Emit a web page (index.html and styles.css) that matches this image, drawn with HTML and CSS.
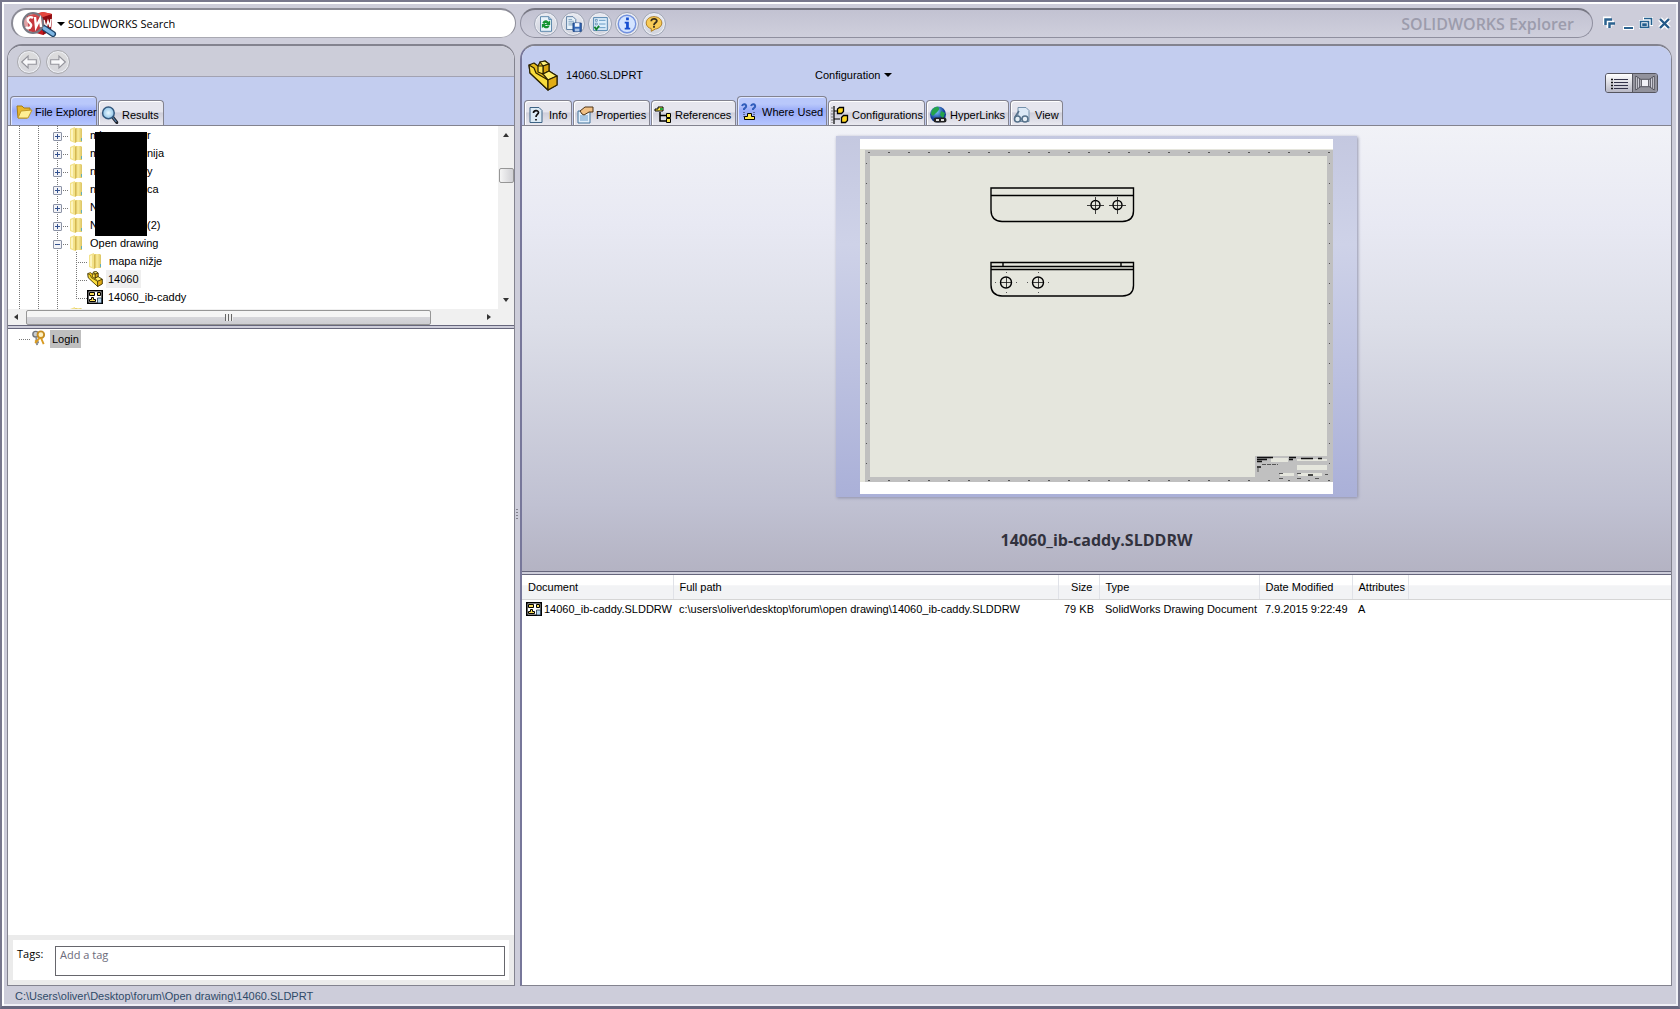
FILE: index.html
```html
<!DOCTYPE html>
<html lang="en">
<head>
<meta charset="utf-8">
<title>SOLIDWORKS Explorer</title>
<link rel="stylesheet" href="styles.css">
</head>
<body>
<svg class="defs" aria-hidden="true">
  <defs>
    <linearGradient id="gold" x1="0" y1="0" x2="1" y2="0"><stop offset="0" stop-color="#efdc80"/><stop offset=".5" stop-color="#f6e795"/><stop offset="1" stop-color="#dcc462"/></linearGradient>
    <linearGradient id="blue" x1="0" y1="0" x2="0" y2="1"><stop offset="0" stop-color="#7db2d2"/><stop offset="1" stop-color="#174a78"/></linearGradient>
    <radialGradient id="lens"><stop offset="0" stop-color="#e9f8ff"/><stop offset="1" stop-color="#8fc4e8"/></radialGradient>
    <radialGradient id="globe" cx=".4" cy=".3"><stop offset="0" stop-color="#7fd0ff"/><stop offset="1" stop-color="#123c96"/></radialGradient>
    <linearGradient id="side" x1="0" y1="0" x2="0" y2="1"><stop offset="0" stop-color="#c4c8e0"/><stop offset=".3" stop-color="#ced2e8"/><stop offset="1" stop-color="#aab0d8"/></linearGradient>
  </defs>
  <symbol id="folder" viewBox="0 0 14 16"><path d="M1 2 6 0v16L1 14z" fill="#f3e28a"/><path d="M6 1h6l1 1v13H6z" fill="url(#gold)"/><path d="M6 2 7.500 1v14L6 16z" fill="#d3b853"/><path d="M2 3 4 2v12l-2-1z" fill="#fdf5c0"/><path d="M12 11h1v3h-1z" fill="#62aeb8"/></symbol>
  <symbol id="part" viewBox="0 0 30 31"><g stroke="#2b2200" stroke-width="1.2" stroke-linejoin="round"><path d="M1 5 6 3 10 6 12 2 17 1 21 4V11l8 5V25l-9 5L2 13z" fill="#e8bc1a"/><path d="M1 5 6 8 8 13 20 20v10L2 13z" fill="#f9dc3c"/><path d="M12 2 17 1 21 4 15 6z" fill="#fff27a"/><path d="M15 6 21 4V11l-6 3z" fill="#d9a510"/><path d="M15 14 21 11l8 5-9 4z" fill="#ffee6c"/><path d="M20 20 29 16v9l-9 5z" fill="#e1ac14"/><path d="M10 6 15 6V14L10 12z" fill="#ffe650"/></g></symbol>
  <symbol id="drawing" viewBox="0 0 16 14"><path d="M.8.8h14.4v12.4H.8z" fill="#fff" stroke="#000" stroke-width="1.600"/><g fill="#f8dc58" stroke="#000"><path d="M2.500 2.500h5v3h-5zM10.500 2.500h3v3h-3z"/><path d="M4.500 7.500h2v2h2v2h-6v-2h2z"/></g><path d="M10.500 8h4v5h-4z" fill="#b9d8f0" stroke="#234" stroke-width=".8"/></symbol>
  <symbol id="mag" viewBox="0 0 16 17"><path d="m10 10 4.500 5.500" stroke="#20242c" stroke-width="3" stroke-linecap="round"/><path d="m10 10 4 5" stroke="#557da8" stroke-width="1.200"/><circle cx="6.500" cy="6.500" r="5.500" fill="url(#lens)" stroke="#34597f" stroke-width="1.400"/></symbol>
</svg>
<div class="window">
  <header class="titlebar">
    <form class="search">
      <svg class="logo" viewBox="0 0 36 26" aria-hidden="true"><path d="M6 5 22 1l9 2-1 16-8 5L8 20z" fill="#c3161c"/><path d="m22 6 9-3-1 16-8 5z" fill="#8f0d12"/><path d="M6 5 22 1l9 2-9 3z" fill="#e5473e"/><path d="m23 9 2 8 2-7 2 6 1-8" fill="none" stroke="#fff" stroke-width="1.500"/><path d="m23 17 9 6" stroke="#1c4267" stroke-width="6" stroke-linecap="round"/><path d="m23 17 9 6" stroke="#7db6e4" stroke-width="3.400" stroke-linecap="round"/><circle cx="12" cy="12" r="10" fill="#c9545a" fill-opacity=".55" stroke="#777883" stroke-width="2"/><path d="M12 7c-3-2-6 0-5 3 1 2 4 3 3 5-1 3-4 2-5 1M14 6l1 10 4-8 1 8" fill="none" stroke="#fff" stroke-width="2.400"/></svg>
      <i class="caret"></i>
      <input class="search-input" type="text" value="SOLIDWORKS Search" aria-label="Search">
    </form>
    <div class="toolbar">
      <button class="round" aria-label="Refresh"><svg viewBox="0 0 24 24"><path d="M6 4h9l3 3v13H6z" fill="#e8f3fb" stroke="#5583a8"/><path d="M15 4v3h3" fill="#aecce4" stroke="#5583a8"/><path d="M8 11c1-4 5-4 7-1.500l1.500-1.500v5h-5l1.500-1.500c-1-1-2-1-2.500.5zM16 13.500c-1 4-5 4-7 1.500l-1.500 1.500v-4.500h5L11 13.500c1 1 2 1 2.500 0z" fill="#149432"/></svg></button>
      <button class="round" aria-label="Save copy"><svg viewBox="0 0 24 24"><path d="M5 4h7l3 3v11H5z" fill="#e8f3fb" stroke="#55779c"/><path d="M7 7h4M7 9h6M7 11h6M7 13h6" stroke="#7b9cba"/><path d="M12 11h9v9h-9z" fill="#3267b8" stroke="#173f80"/><path d="M14 11h5v4h-5z" fill="#f1f6fd"/><path d="M14 17h5v3h-5z" fill="#a9c4e8"/></svg></button>
      <button class="round" aria-label="Options"><svg viewBox="0 0 24 24"><path d="M5 5h15v14H5z" fill="#dcedfb" stroke="#4d80ad"/><path d="M7 7h2v2H7zM7 11h2v2H7z" fill="#fff" stroke="#4d80ad" stroke-width=".8"/><path d="M11 8h7M11 12h7M11 16h7" stroke="#5c93c0"/><path d="m6 15 2 3 3-4" fill="none" stroke="#118330" stroke-width="2"/></svg></button>
      <button class="round" aria-label="Information"><svg viewBox="0 0 24 24"><circle cx="12" cy="12" r="9.500" fill="#d4e4ff" stroke="#7291df" stroke-width="1.500"/><path d="M11 5h3v3h-3zM9.500 9.500H14V16h1.500v2h-6v-2H11v-4.500H9.500z" fill="#164ed0"/></svg></button>
      <button class="round" aria-label="Help"><svg viewBox="0 0 24 24"><path d="M12 4c5 0 8.500 3 8.500 7 0 3-3 6-7 6.500L9 20v-3c-3-.5-5.500-3-5.500-6C3.500 7 7 4 12 4z" fill="#f8cb57" stroke="#a87619"/><path d="M9 9c0-4 7-3 6 0-.5 1.500-3 2-3 4" fill="none" stroke="#3c311b" stroke-width="2"/><path d="M11 14h2v2h-2z" fill="#3c311b"/></svg></button>
      <h1 class="brand">SOLIDWORKS Explorer</h1>
    </div>
    <div class="controls">
      <button aria-label="Compact"><svg viewBox="0 0 14 14"><path d="M2 9V3h6M6 12V7h5" fill="none" stroke="#fff" stroke-width="5"/><path d="M2.500 9V3.500H9M6.500 12V7.500H12" fill="none" stroke="#2c6390" stroke-width="2.500"/></svg></button>
      <button aria-label="Minimize"><svg viewBox="0 0 14 14"><path d="M2 10h11v4H2z" fill="#fff"/><path d="M3 11h9v2H3z" fill="#2c6390"/></svg></button>
      <button aria-label="Restore"><svg viewBox="0 0 14 14"><path d="M4 1h10v9H4zM0 4h10v9H0z" fill="#fff"/><path d="M5 2.500h7.500V9M1.500 5.500h8v6h-8zM4 8h3v1.500H4z" fill="none" stroke="#23608f" stroke-width="1.600"/></svg></button>
      <button aria-label="Close"><svg viewBox="0 0 14 14"><path d="m3 3 9 9M12 3 3 12" stroke="#fff" stroke-width="5"/><path d="m3 3 9 9M12 3 3 12" stroke="#255b89" stroke-width="2.400"/></svg></button>
    </div>
  </header>

  <div class="panes">
    <aside class="pane left">
      <div class="nav">
        <button class="round" aria-label="Back"><svg viewBox="0 0 24 24"><path d="m4 12 7-6.500v4h9v5h-9v4z" fill="#f8f8fa" stroke="#94949c" stroke-width="1.200"/></svg></button>
        <button class="round" aria-label="Forward"><svg viewBox="0 0 24 24"><path d="m20 12-7-6.500v4H4v5h9v4z" fill="#f8f8fa" stroke="#94949c" stroke-width="1.200"/></svg></button>
      </div>
      <div class="tabs left-tabs">
        <button class="tab active t-files"><svg viewBox="0 0 18 18"><path d="M2 3h5l2 2h6v3l-3 7H3z" fill="#e7b62d" stroke="#a67c12"/><path d="m6 8 11-1-4 8H3z" fill="#ffee94" stroke="#c29a28"/></svg>File Explorer</button>
        <button class="tab t-results"><svg viewBox="0 0 16 17"><use href="#mag"/></svg>Results</button>
      </div>
      <div class="tree-pane">
        <ul class="tree">
          <li class="row"><i class="g"></i><i class="g"></i><span class="g dash"><button class="toggle plus" aria-label="Expand"></button></span><svg class="fold"><use href="#folder"/></svg><span class="cut">mi</span><span>r</span></li>
          <li class="row"><i class="g"></i><i class="g"></i><span class="g dash"><button class="toggle plus" aria-label="Expand"></button></span><svg class="fold"><use href="#folder"/></svg><span class="cut">m</span><span>nija</span></li>
          <li class="row"><i class="g"></i><i class="g"></i><span class="g dash"><button class="toggle plus" aria-label="Expand"></button></span><svg class="fold"><use href="#folder"/></svg><span class="cut">n</span><span>y</span></li>
          <li class="row"><i class="g"></i><i class="g"></i><span class="g dash"><button class="toggle plus" aria-label="Expand"></button></span><svg class="fold"><use href="#folder"/></svg><span class="cut">n</span><span>ca</span></li>
          <li class="row"><i class="g"></i><i class="g"></i><span class="g dash"><button class="toggle plus" aria-label="Expand"></button></span><svg class="fold"><use href="#folder"/></svg><span class="cut">N</span></li>
          <li class="row"><i class="g"></i><i class="g"></i><span class="g dash"><button class="toggle plus" aria-label="Expand"></button></span><svg class="fold"><use href="#folder"/></svg><span class="cut">N</span><span>(2)</span></li>
          <li class="row"><i class="g"></i><i class="g"></i><span class="g dash"><button class="toggle" aria-label="Collapse"></button></span><svg class="fold"><use href="#folder"/></svg><span>Open drawing</span></li>
          <li class="row"><i class="g"></i><i class="g"></i><i class="g"></i><i class="g dash leaf"></i><svg class="fold"><use href="#folder"/></svg><span>mapa nižje</span></li>
          <li class="row"><i class="g"></i><i class="g"></i><i class="g"></i><i class="g dash leaf"></i><svg class="file"><use href="#part"/></svg><span class="current">14060</span></li>
          <li class="row"><i class="g"></i><i class="g"></i><i class="g"></i><i class="g dash leaf last"></i><svg class="file"><use href="#drawing"/></svg><span>14060_ib-caddy</span></li>
          <li class="row"><i class="g"></i><i class="g"></i><i class="g"></i><svg class="fold"><use href="#folder"/></svg></li>
        </ul>
        <div class="mask"></div>
        <div class="vbar"><i class="up"></i><i class="thumb"></i><i class="down"></i></div>
        <div class="hbar"><i class="lft"></i><i class="thumb"><b></b></i><i class="rgt"></i></div>
      </div>
      <div class="split"></div>
      <div class="login">
        <i class="lead"></i>
        <svg class="key" viewBox="0 0 15 17" aria-hidden="true"><circle cx="4.500" cy="4.500" r="3" fill="#c8ccd0" stroke="#72767c" stroke-width="1.500"/><path d="m5 7 1 9M6 13h2" stroke="#8a8e93" stroke-width="2"/><circle cx="10" cy="5" r="3.500" fill="#fff2c2" stroke="#c58d22" stroke-width="2"/><path d="m9 8-5 6M10 8l3 7M4 11l2 2" stroke="#d89b22" stroke-width="2"/></svg>
        <a class="login-link" href="#login">Login</a>
      </div>
      <div class="tags"><div class="tags-in"><label for="tag">Tags:</label><textarea id="tag" rows="1" placeholder="Add a tag"></textarea></div></div>
    </aside>

    <i class="grip"></i>

    <main class="pane right">
      <div class="doc">
        <svg class="doc-icon"><use href="#part"/></svg>
        <span class="doc-name">14060.SLDPRT</span>
        <button class="config">Configuration <i class="caret"></i></button>
        <div class="view-switch">
          <button aria-label="List view"><svg viewBox="0 0 26 18"><path d="M8 5.500h14M8 8.500h14M8 11.500h14M8 14.500h14" stroke="#33334a"/><path d="M5 5.500h2M5 8.500h2M5 11.500h2M5 14.500h2" stroke="#111" stroke-width="1.500"/></svg></button>
          <button class="on" aria-label="Preview view"><svg viewBox="0 0 26 18"><path d="M3 1.500v15l6-4v-7zM23 1.500v15l-6-4v-7z" fill="#e6e6ee" stroke="#464650"/><path d="M5 3v12M7 4v10M21 3v12M19 4v10" stroke="#55555f"/><path d="M9 5h8v8H9z" fill="#f1f1f8" stroke="#464650"/></svg></button>
        </div>
      </div>
      <div class="tabs right-tabs">
        <button class="tab t-info"><svg viewBox="0 0 18 18"><path d="M3 1.500h9l3 3v12H3z" fill="#dcebf6" stroke="#3d6385"/><path d="M6.500 7c0-3 5-3 5-.5C11.500 8.500 9 8.500 9 11M9 13v1.500" fill="none" stroke="#111" stroke-width="1.700"/></svg>Info</button>
        <button class="tab t-prop"><svg viewBox="0 0 18 18"><path d="M2 5h12v12H2z" fill="#e3f0fc" stroke="#41729c"/><path d="M4 10h8M4 12h8M4 14h8" stroke="#6b9cc9"/><path d="m4 5 5-4h8v5h-4l-5 3-2-1z" fill="#f0c085" stroke="#4e3315"/></svg>Properties</button>
        <button class="tab t-ref"><svg viewBox="0 0 18 18"><path d="M1 5V3h3V1h5v4z" fill="#ffe84b" stroke="#000"/><path d="M6 2h3v2H6z" fill="#26a838"/><path d="M6 6v9h6M6 9.500h6" fill="none" stroke="#000" stroke-width="1.500"/><path d="M12.500 7.500h4v4h-4zM12.500 12.500h4v4h-4z" fill="#ffe84b" stroke="#000"/></svg>References</button>
        <button class="tab active t-where"><svg viewBox="0 0 18 18"><path d="M2 3c1-3 5-2 4 1L4 6v1M11 3c1-3 5-2 4 1l-2 2v1" fill="none" stroke="#315ebc" stroke-width="2"/><path d="M4 9v5M14 9v5" stroke="#223" stroke-dasharray="1 1"/><path d="M7.500 10.500h4v3h3v3h-10v-3h3z" fill="#ffe84b" stroke="#000"/></svg>Where Used</button>
        <button class="tab t-conf"><svg viewBox="0 0 18 18"><path d="M3 0v18M3 5h4M3 13h6" stroke="#000" stroke-width="1.200"/><path d="M1 1v16" stroke="#777" stroke-dasharray="2 1"/><path d="m6.500 3 2-1.500h4v4l-2 2h-4zM10.500 11.500l2-2h4v5l-2 2h-4z" fill="#ffd823" stroke="#000" stroke-width="1.300"/></svg>Configurations</button>
        <button class="tab t-link"><svg viewBox="0 0 18 18"><circle cx="9" cy="8.500" r="8" fill="url(#globe)"/><path d="M3 4c3-4 6-4 7-2S7 7 5 9 2 8 2 7zM12 5l4 2-2 6-3-4z" fill="#24a34b"/><path d="M7 14h4M10 14h5" stroke="#222" stroke-width="5" stroke-linecap="round"/><path d="M7 14h3M12 14h3" stroke="#ddd" stroke-width="2"/></svg>HyperLinks</button>
        <button class="tab t-view"><svg viewBox="0 0 18 18"><path d="M5 1.500h8l3 3v11H5z" fill="#dce9f6" stroke="#7591ab"/><circle cx="4.500" cy="13" r="3" fill="#e5eef5" stroke="#56718a" stroke-width="1.600"/><circle cx="12" cy="13" r="3" fill="#e5eef5" stroke="#56718a" stroke-width="1.600"/><path d="M2 11 6 5M8 13h1" stroke="#56718a" stroke-width="1.600"/></svg>View</button>
      </div>
      <section class="preview">
        <svg class="sheet" viewBox="836 136 521 361" role="img" aria-label="Drawing preview">
          <path fill="url(#side)" d="M836 136h521v361H836z"/>
          <path fill="#fff" d="M860 139h473v355H860z"/>
          <path fill="#e5e5dc" d="M860 149h473v333H860z"/>
          <path fill="#c0c0c0" d="M865 150h468v332H865z"/>
          <path fill="#e5e6dd" d="M870 156h457v321H870z"/>
          <path d="M868 152.500h462M868 480.500h462" stroke="#555" stroke-dasharray="2 18"/>
          <path d="M866.500 163v316M1329.500 163v316" stroke="#555" stroke-dasharray="1 19"/>
          <g fill="none" stroke="#000" stroke-width="1.400">
            <path d="M991 188h142.500v23q0 10-11 10.500h-120.500Q991 221 991 210zM991 195.500h142.500"/>
            <circle cx="1095.500" cy="205" r="4.500"/><circle cx="1117.500" cy="205" r="4.500"/>
            <path d="M991 262.500h142.500v23q0 10-11 10.500h-120.500Q991 295.500 991 285zM991 266.500h142.500M991 269.500h142.500M1003 262v4M1121 262v4"/>
            <circle cx="1006" cy="282.500" r="5.500"/><circle cx="1038" cy="282.500" r="5.500"/>
          </g>
          <path d="M1087 205.500h17M1109 205.500h17M1095.500 197v17M1117.500 197v17M1001 282.500h10M1033 282.500h10M1006.500 277v11M1038.500 277v11" stroke="#111" stroke-width=".8"/>
          <path d="M995 282.500h1M1016 282.500h1M1027 282.500h1M1048 282.500h1M1006 272.500h1M1006 292.500h1M1038 272.500h1M1038 292.500h1" stroke="#555"/>
          <path fill="#c0c0c0" d="M1255 456h73v24h-73z"/>
          <path fill="#e5e6dd" d="M1271 458h17v4h-17zM1297 459h30v2h-30zM1297 465h30v5h-30zM1280 473h14v3h-14zM1298 473h24v3h-24z"/>
          <path d="M1257 457.500h16M1257 459.500h10M1257 461.500h5M1289 457.500h7M1289 459.500h4M1301 458.500h12M1318 458.500h4M1308 475h5M1257 467h4" stroke="#111" stroke-width="1.600"/>
          <path d="M1262 464.500h16M1258 468v5M1279 473.500h4M1279 478.500h4M1297 473.500h4M1297 478.500h4M1315 478.500h5M1325 474.500h3" stroke="#555" stroke-dasharray="4 1"/>
        </svg>
        <h2 class="caption">14060_ib-caddy.SLDDRW</h2>
      </section>
      <div class="split"></div>
      <table class="list">
        <colgroup><col class="c-doc"><col class="c-path"><col class="c-size"><col class="c-type"><col class="c-date"><col class="c-attr"><col></colgroup>
        <thead><tr><th>Document</th><th>Full path</th><th class="num">Size</th><th>Type</th><th>Date Modified</th><th>Attributes</th><th></th></tr></thead>
        <tbody><tr><td class="name"><svg class="file"><use href="#drawing"/></svg>14060_ib-caddy.SLDDRW</td><td>c:\users\oliver\desktop\forum\open drawing\14060_ib-caddy.SLDDRW</td><td class="num">79 KB</td><td>SolidWorks Drawing Document</td><td>7.9.2015 9:22:49</td><td>A</td><td></td></tr></tbody>
      </table>
    </main>
  </div>
  <footer class="status">C:\Users\oliver\Desktop\forum\Open drawing\14060.SLDPRT</footer>
</div>
</body>
</html>
```
FILE: styles.css
```css
* { box-sizing: border-box; }
body { margin: 0; color: #000; font: 11px/16px "Liberation Sans", Arial, sans-serif; }
button { margin: 0; padding: 0; border: 0; background: none; font: inherit; color: inherit; }
.defs { position: absolute; width: 0; height: 0; }

.window {
  display: flex; flex-direction: column; min-height: 100vh; padding: 6px 5px 0;
  background: #cdcdda; border: 2px solid #77778c; border-bottom: 3px solid #66667e;
  box-shadow: inset 2px 2px #fff, inset -2px -2px #f0f0f6;
}

/* Title row */
.titlebar { display: flex; height: 30px; gap: 4px; align-items: center; }
.search {
  display: flex; align-items: center; flex: none; width: 505px; height: 30px; margin-left: 4px; padding-left: 8px;
  border: 2px solid #8b8b96; border-right-width: 1px; border-bottom: 1px solid #a9a9b2; border-radius: 15px; background: #fff;
}
.logo { width: 36px; height: 26px; }
.caret { display: inline-block; border: 4px solid transparent; border-top-color: #000; border-bottom: 0; }
.search-input { flex: 1; min-width: 0; border: 0; padding: 0 0 0 3px; background: none; font: 11px/16px "Open Sans", "Noto Sans", sans-serif; outline: 0; }
.toolbar {
  display: flex; flex: 1; align-items: center; gap: 3px; height: 30px; padding: 0 18px 0 13px;
  border: 1px solid #8f8f9f; border-top: 2px solid #777783; border-radius: 15px; background: linear-gradient(#c2c2d2, #cfcfdc);
}
.round { flex: none; width: 24px; height: 24px; border: 1px solid #a0a6b6; border-radius: 12px; background: linear-gradient(#e8eaf1, #cfd2dc); box-shadow: inset 0 0 0 1px #eceef4; }
.round svg { display: block; width: 22px; height: 22px; }
.brand { margin: 0 0 0 auto; color: #9c9cac; font: 600 16px/24px "Open Sans", "Noto Sans", sans-serif; }
.controls { display: flex; gap: 4px; margin: 0 2px 0 6px; }
.controls button, .controls svg { display: block; width: 14px; height: 14px; }

/* Panes */
.panes { display: grid; grid-template-columns: 508px 5px minmax(0, 1fr); flex: 1; margin-top: 6px; }
.pane { display: flex; flex-direction: column; overflow: hidden; border: 1px solid #83838f; background: #fff; }
.left { border-radius: 15px 15px 0 0; border-top-width: 2px; }
.right { border-radius: 15px 15px 0 0; border-top-width: 2px; border-left: 2px solid #77779a; margin-right: 1px; }
.grip { align-self: center; height: 12px; width: 2px; margin-left: 1px; background: repeating-linear-gradient(#83838f 0 1px, transparent 1px 3px); }
.nav { display: flex; gap: 5px; height: 31px; padding: 4px 0 0 9px; border-bottom: 1px solid #a2a2b2; background: #cccdd9; }
.nav .round { border-color: #a9a9ae; background: linear-gradient(#ddd, #d6d6dc); }

.tabs { display: flex; align-items: flex-end; gap: 1px; background: #c3cdef; border-bottom: 1px solid #83838f; }
.left-tabs { height: 49px; padding-left: 2px; }
.right-tabs { height: 30px; padding-left: 2px; }
.tab {
  display: flex; align-items: center; gap: 2px; height: 25px; padding: 3px 2px 0 2px; white-space: nowrap;
  border: 1px solid #83838f; border-bottom: 0; border-radius: 4px 4px 0 0; box-shadow: inset 1px 1px #fff;
  background: linear-gradient(#e6e6ee 0 45%, #cfcfdb 50%, #e9e9f0);
}
.tab.active { height: 29px; padding-top: 1px; background: linear-gradient(#b9c8fb 0 25%, #98aaf8 50%, #b6c6ff); box-shadow: inset 1px 1px #dfe6ff; }
.tab svg { flex: none; width: 18px; height: 18px; }
.t-files { width: 87px; padding-left: 4px; }
.t-results { width: 66px; gap: 3px; }
.t-info { width: 48px; gap: 4px; }
.t-prop { width: 77px; }
.t-ref { width: 85px; gap: 3px; }
.t-where { width: 90px; gap: 4px; }
.t-conf { width: 97px; gap: 3px; }
.t-link { width: 83px; gap: 3px; }
.t-view { width: 53px; gap: 4px; }

/* File tree */
.tree-pane { position: relative; display: grid; grid-template: 183px 16px / minmax(0, 1fr) 16px; background: #f0f0f0; }
.tree { margin: 0; padding: 0 0 0 11px; overflow: hidden; list-style: none; background: #fff; }
.row { display: flex; align-items: center; height: 18px; white-space: nowrap; }
.g { flex: none; display: block; width: 19px; height: 18px; background: repeating-linear-gradient(#777 0 1px, transparent 1px 2px) 0 0 / 1px 100% no-repeat; }
.dash { background: repeating-linear-gradient(#777 0 1px, transparent 1px 2px) 0 0 / 1px 100% no-repeat, repeating-linear-gradient(90deg, #777 0 1px, transparent 1px 2px) 0 10px / 11px 1px no-repeat; }
.last { background-size: 1px 11px, 11px 1px; }
.leaf { width: 11px; }
.toggle { display: block; width: 9px; height: 9px; margin: 6px 0 0 -4px; border: 1px solid #8c93a6; border-radius: 1px; background: linear-gradient(#33518f, #33518f) center / 5px 1px no-repeat, #f3f4f8; }
.plus { background: linear-gradient(#33518f, #33518f) center / 5px 1px no-repeat, linear-gradient(#33518f, #33518f) center / 1px 5px no-repeat, #f3f4f8; }
.fold { flex: none; width: 14px; height: 16px; margin: 0 7px 0 -7px; }
.leaf + .fold { margin-left: 1px; }
.file { flex: none; width: 16px; height: 16px; margin-right: 5px; }
.cut { width: 57px; }
.current { margin-left: -2px; padding: 0 2px; background: #efefef; line-height: 18px; }
.mask { position: absolute; left: 87px; top: 6px; width: 52px; height: 104px; background: #000; }
.vbar { display: flex; flex-direction: column; align-items: center; padding: 7px 0; }
.vbar i, .hbar i { flex: none; border: 3px solid transparent; }
.vbar .up { border-bottom: 4px solid #333; border-top: 0; }
.vbar .down { margin-top: auto; border-top: 4px solid #333; border-bottom: 0; }
.vbar .thumb { width: 15px; height: 15px; margin-top: 31px; border: 1px solid #969696; border-radius: 2px; background: linear-gradient(90deg, #f5f5f5, #d0d0d4); }
.hbar { display: flex; align-items: center; padding: 0 7px 0 6px; }
.hbar .lft { border-right: 4px solid #333; border-left: 0; }
.hbar .rgt { margin-left: auto; border-left: 4px solid #333; border-right: 0; }
.hbar .thumb { display: grid; place-items: center; width: 405px; height: 15px; margin-left: 8px; border: 1px solid #969696; border-radius: 2px; background: linear-gradient(#f5f5f5 45%, #d6d6da 50%, #cdcdd2); }
.hbar b { width: 8px; height: 7px; background: repeating-linear-gradient(90deg, #666 0 1px, #eee 1px 3px); }
.split { flex: none; height: 4px; border: 1px solid #66667c; border-width: 1px 0; background: #cdcdda; }
.login { display: flex; flex: 1; align-items: flex-start; padding: 1px 0 0 11px; }
.lead { width: 11px; height: 1px; margin-top: 9px; background: repeating-linear-gradient(90deg, #777 0 1px, transparent 1px 2px); }
.key { width: 15px; height: 16px; margin: 0 4px 0 1px; }
.login-link { padding: 0 2px; color: #000; background: #bfbfbf; text-decoration: none; line-height: 18px; }
.tags { padding: 5px; background: #ebebeb; }
.tags-in { display: flex; align-items: flex-start; height: 40px; padding: 6px 4px 4px; background: #fff; font: 11px/16px "Open Sans", "Noto Sans", sans-serif; }
.tags-in label { width: 38px; }
.tags textarea { flex: 1; height: 30px; margin: 0; padding: 0 4px; border: 1px solid #66666c; font: inherit; resize: none; outline: 0; overflow: hidden; }
.tags textarea::placeholder { color: #6b6b7a; }

/* Document header */
.doc { display: flex; align-items: center; height: 50px; padding: 8px 13px 0 6px; background: #c3cdef; }
.doc-icon { width: 30px; height: 31px; }
.doc-name { width: 257px; padding-left: 8px; }
.config { display: flex; align-items: center; gap: 4px; }
.view-switch { display: flex; margin: 16px 0 0 auto; height: 20px; overflow: hidden; border: 1px solid #55555f; border-radius: 3px; }
.view-switch button { width: 26px; height: 18px; background: linear-gradient(#fff, #b9b9c6); }
.view-switch .on { width: 25px; background: #92929c; border-left: 1px solid #55555f; }
.view-switch svg { display: block; width: 100%; height: 100%; }

.preview { display: flex; flex-direction: column; align-items: center; padding: 10px 0 18px; background: linear-gradient(#f1f2f7, #e8e9f3 22%, #dcdee8 45%, #c0c1d2 85%, #b4b3c3); }
.sheet { width: 521px; height: 361px; max-width: 100%; box-shadow: 1px 1px 3px #8f90ab; }
.caption { margin: 31px 0 0; color: #32323e; font: bold 16px/25px "Open Sans", "Noto Sans", sans-serif; }

/* Results table */
.list { width: 100%; table-layout: fixed; border-collapse: collapse; white-space: nowrap; }
.list th { height: 24px; padding: 0 6px; text-align: left; font-weight: normal; border-right: 1px solid #e0e2e8; border-bottom: 1px solid #d5d5d5; background: linear-gradient(#fff 40%, #f2f3f5 45%); }
.list th:last-child { border-right: 0; }
.list td { height: 18px; padding: 0 6px; }
.list td.name { display: flex; align-items: center; padding: 0 0 0 4px; }
.list .num { text-align: right; }
.name .file { margin-right: 2px; }
.c-doc { width: 151px; } .c-path { width: 385px; } .c-size { width: 41px; } .c-type { width: 160px; } .c-date { width: 93px; } .c-attr { width: 56px; }

.status { height: 20px; padding: 2px 0 0 8px; color: #2f4a68; }
```
